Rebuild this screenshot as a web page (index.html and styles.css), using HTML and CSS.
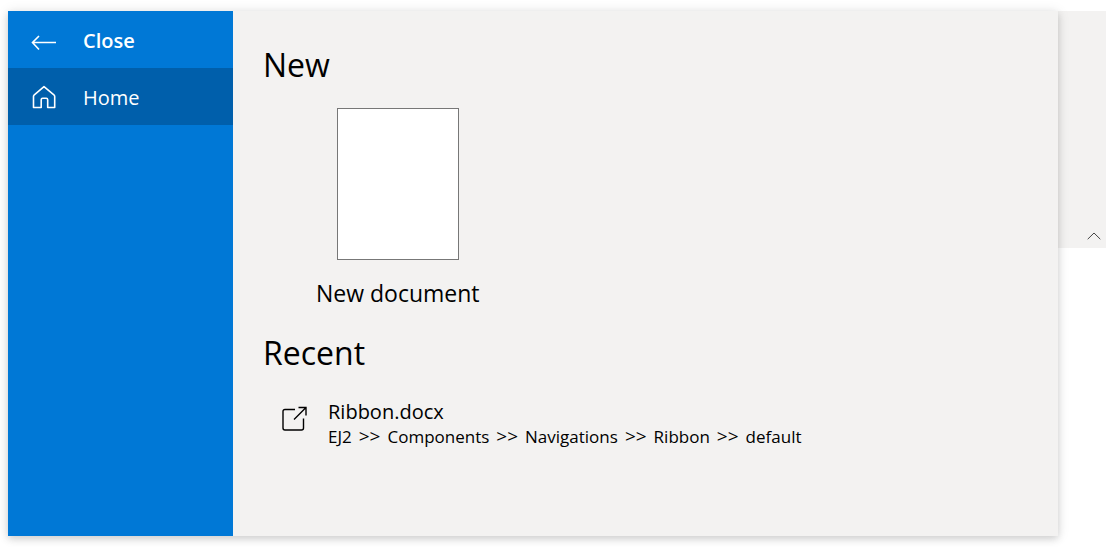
FILE: index.html
```html
<!DOCTYPE html>
<html lang="en">
<head>
<meta charset="utf-8">
<title>Ribbon backstage</title>
<link rel="stylesheet" href="styles.css">
</head>
<body>
<div class="ribbon">
  <button class="ribbon-collapse" type="button" aria-label="Collapse ribbon">
    <svg width="14" height="8" viewBox="0 0 14 8"><path d="M.7 7.2 7 1l6.300 6.200"/></svg>
  </button>
  <div class="backstage">
    <nav class="menu">
      <button class="menu-item menu-close" type="button">
        <svg class="menu-icon" width="26" height="26" viewBox="0 0 26 26"><path d="M25 14.500H1.500M8 8l-6.500 6.500 6.500 7"/></svg>
        <span>Close</span>
      </button>
      <button class="menu-item menu-active" type="button">
        <svg class="menu-icon" width="26" height="26" viewBox="0 0 26 26"><path d="M13 1.700 23.200 10.200Q23.700 10.700 23.700 11.400V22.500H16.700V14.700Q16.700 13.200 15.200 13.200H11.700Q10.200 13.200 10.200 14.700V22.500H2.500V11.400Q2.500 10.700 3 10.200Z" stroke-linejoin="round"/></svg>
        <span>Home</span>
      </button>
    </nav>
    <main class="content">
      <h1 class="heading">New</h1>
      <button class="new-doc" type="button">
        <span class="page-thumb"></span>
        <span>New document</span>
      </button>
      <h1 class="heading">Recent</h1>
      <a class="recent" href="#">
        <svg class="recent-icon" width="26" height="26" viewBox="0 0 26 26"><path d="M13 3.500H3Q1 3.500 1 5.500V22Q1 24 3 24H19.500Q21.500 24 21.500 22V12.500M12 13.500 24 1.500M16.500 1.500H24V9.500"/></svg>
        <span class="recent-text">
          <span class="recent-name">Ribbon.docx</span>
          <span class="recent-path">
            <span>EJ2</span> <span class="sep">&gt;&gt;</span>
            <span>Components</span> <span class="sep">&gt;&gt;</span>
            <span>Navigations</span> <span class="sep">&gt;&gt;</span>
            <span>Ribbon</span> <span class="sep">&gt;&gt;</span>
            <span>default</span>
          </span>
        </span>
      </a>
    </main>
  </div>
</div>
</body>
</html>
```
FILE: styles.css
```css
* { box-sizing: border-box; }
body {
  min-height: 100vh;
  margin: 0;
  padding: 11px 11px 0 8px;
  background: #fff;
  color: #000;
  font-family: "Open Sans", "Noto Sans", sans-serif;
}
button { border: 0; background: none; font: inherit; color: inherit; cursor: pointer; }
svg { fill: none; stroke: currentColor; flex: none; }
.ribbon {
  position: relative;
  height: 237px;
  display: flex;
  justify-content: flex-end;
  align-items: flex-end;
  background: #f3f2f1;
}
.ribbon-collapse { display: flex; padding: 8px 5px; color: #444; }
.backstage {
  position: absolute;
  inset: 0 48px auto 0;
  display: flex;
  min-height: calc(100vh - 22px);
  background: #f3f2f1;
  box-shadow: 0 3px 7px rgba(0, 0, 0, .13), 0 1px 12px rgba(0, 0, 0, .11);
}
.menu { flex: none; width: 225px; background: #0078d6; color: #fff; }
.menu-item {
  display: flex;
  align-items: center;
  gap: 26px;
  width: 100%;
  height: 57px;
  padding: 2px 23px 0;
  font-size: 20px;
  line-height: 30px;
}
.menu-icon { stroke-width: 1.6; }
.menu-close { font-weight: 600; }
.menu-active { background: #005fab; }
.content { flex: 1; padding: 32px 30px; }
.heading { margin: 0; font-size: 32px; font-weight: 400; line-height: 44px; }
.new-doc {
  display: flex;
  flex-direction: column;
  align-items: center;
  gap: 16px;
  margin: 21px 0 21px 53px;
  padding: 0;
  font-size: 23px;
  line-height: 34px;
}
.page-thumb { width: 122px; height: 152px; border: 1px solid #777; background: #fff; }
.recent {
  display: flex;
  gap: 20px;
  margin: 24px 0 0 19px;
  color: inherit;
  text-decoration: none;
}
.recent-icon { margin-top: 7px; stroke-width: 1.400; }
.recent-text { display: flex; flex-direction: column; }
.recent-name { font-size: 20px; line-height: 26px; }
.recent-path { display: flex; flex-wrap: wrap; align-items: baseline; gap: 0 7px; font-size: 17px; line-height: 24px; }
.sep { font-size: 19px; line-height: 20px; }
```
